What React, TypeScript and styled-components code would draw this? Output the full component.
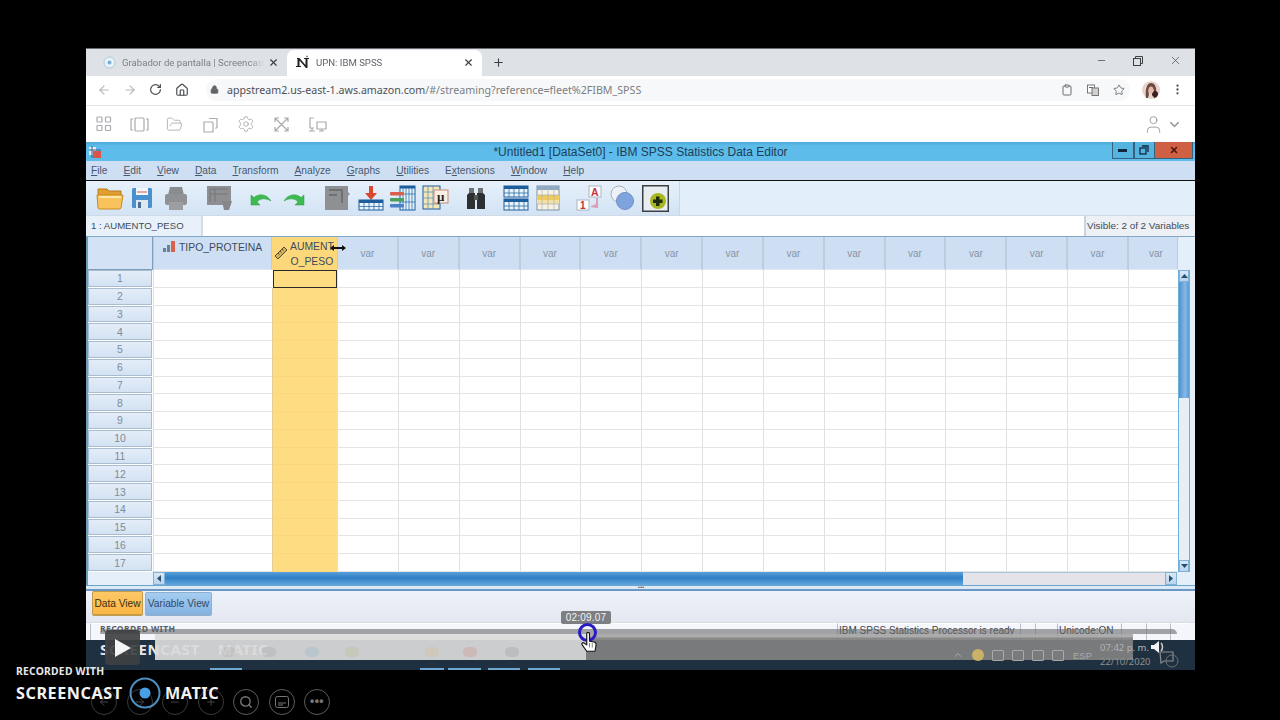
import React from "react";
import styled, { createGlobalStyle } from "styled-components";
import { ArrowLeft, ArrowRight, RotateCw, Home, Lock, Clipboard, Star, MoreVertical, Minus, X, Plus, FolderOpen, Settings, User, ChevronDown, Search } from "lucide-react";

const Global = createGlobalStyle`
  html, body { margin: 0; background: #000; }
  * { box-sizing: border-box; }
`;

const Page = styled.div`
  position: relative; width: 1280px; height: 720px; background: #000; overflow: hidden;
  padding: 48px 85px 0 86px; font-family: "Liberation Sans", Arial, sans-serif;
`;
const Win = styled.div`display: flex; flex-direction: column; width: 1109px; height: 622px; background: #fff;`;

/* browser chrome */
const TabStrip = styled.div`
  height: 28px; background: #dee1e6; border-top: 1px solid #6b6d70; display: flex; align-items: flex-end; padding-left: 11px; flex: none;
`;
const Tab = styled.div<{ $active?: boolean }>`
  display: flex; align-items: center; height: 26px; border-radius: 7px 7px 0 0; padding: 0 8px 2px ${p => (p.$active ? 9 : 6)}px;
  width: ${p => (p.$active ? 195 : 190)}px; background: ${p => (p.$active ? "#fff" : "transparent")};
  font-family: Roboto, sans-serif; font-size: 9.6px; color: ${p => (p.$active ? "#5f6368" : "#7d8185")};
`;
const TabLabel = styled.span<{ $w: number }>`
  width: ${p => p.$w}px; white-space: nowrap; overflow: hidden; margin-left: 6px; flex: none;
  -webkit-mask-image: linear-gradient(90deg, #000 90%, transparent);
`;
const TabClose = styled(X)`margin-left: auto; color: #3c4043; flex: none;`;
const NewTab = styled(Plus)`margin: 0 0 7px 10px; color: #3c4043;`;
const WinControls = styled.div`margin-left: auto; display: flex; gap: 26px; align-items: center; align-self: center; padding: 0 13px 4px 0; color: #3c4043;`;

const AddressBar = styled.div`
  height: 30px; flex: none; display: flex; align-items: center; padding: 0 0 2px 11px;
  border-bottom: 1px solid #e4e6e9; color: #5f6368;
`;
const NavIcon = styled.span<{ $w: number; $faint?: boolean }>`
  width: ${p => p.$w}px; flex: none; display: flex; color: ${p => (p.$faint ? "#b4b7bb" : "#4a4d51")};
`;
const Omnibox = styled.div`
  flex: none; width: 924px; margin-left: 7px; height: 22px; background: #f7f8f9; border-radius: 11px;
  display: flex; align-items: center; padding: 0 5px 0 4px; color: #5f6368;
`;
const Url = styled.span`font-family: "Noto Sans", sans-serif; font-size: 10.66px; margin-left: 8px; color: #7a7e83; white-space: nowrap;`;
const Host = styled.span`color: #4d5156;`;
const OmniRight = styled.div`margin-left: auto; display: flex; align-items: center; gap: 14px; color: #6a6d71;`;
const Avatar = styled.svg`margin-left: 12px; flex: none;`;
const MoreWrap = styled(NavIcon)`margin-left: 11px;`;

const AppBar = styled.div`
  height: 36px; flex: none; display: flex; align-items: center; padding: 0 13px 0 0; color: #a9abae;
`;
const AppIcon = styled.span`width: 35.6px; display: flex; justify-content: center;`;
const AppRight = styled.div`margin-left: auto; display: flex; align-items: center; gap: 3px; color: #9b9da0;`;

/* SPSS */
const TitleBar = styled.div`
  height: 19px; flex: none; display: grid; grid-template-columns: 1fr auto 1fr; align-items: center;
  background: linear-gradient(#4aa9d6, #5dbce9 20%); font-size: 12px; color: #1d3d58; padding-top: 1px;
`;
const SpssLogo = styled.svg`margin-left: 2px;`;
const TitleBtns = styled.div`justify-self: end; display: flex; height: 17px; margin: -1px 2px 0 0; align-self: start;`;
const TitleBtn = styled.div<{ $close?: boolean }>`
  width: ${p => (p.$close ? 38 : 21.5)}px; display: flex; align-items: center; justify-content: center;
  background: ${p => (p.$close ? "#cf6043" : "#55b3e0")}; border: 1px solid #35637f; border-left-width: ${p => (p.$close ? 0 : 1)}px;
  border-top: 0; color: ${p => (p.$close ? "#4a1208" : "#10283c")};
`;
const MenuBar = styled.div`
  height: 20px; flex: none; display: flex; gap: 16px; align-items: center; padding: 0 0 1px 5px;
  background: #cfdff3; border-bottom: 1px solid #111; font-size: 10.2px; color: #46596e;
`;
const MenuItem = styled.span`white-space: nowrap;`;
const Toolbar = styled.div`height: 35px; flex: none; background: #e2eefa; display: flex; border-bottom: 1px solid #cfdae6;`;
const ToolSegment = styled.div`
  width: 594px; display: flex; align-items: center; padding-left: 7px;
  background: linear-gradient(#e6f1fb, #d3e3f4); border-right: 1px solid #c9d7e6;
`;
const ToolSlot = styled.span<{ $gap: number }>`margin-left: ${p => p.$gap}px; display: flex; flex: none;`;

const FormulaBar = styled.div`height: 21px; flex: none; display: flex; background: #fff; font-size: 9.6px; color: #3e4a56; border-bottom: 1px solid #7fa9c6;`;
const NameBox = styled.div`width: 117px; padding: 4px 0 0 5px; background: #e8f1fa; border-right: 2px solid #d4dbe3;`;
const FormulaInput = styled.div`flex: 1;`;
const VisibleBox = styled.div`width: 111px; padding: 4px 0 0 1px; background: #edf0f4; border-left: 2px solid #cdd3da; font-size: 9.9px; white-space: nowrap;`;

const DataArea = styled.div`height: 335px; flex: none; display: flex; background: #e4eff9; border-left: 2px solid #6d9db9;`;
const Grid = styled.div`
  width: 1090px; display: grid; height: 335px;
  grid-template-columns: 65px 119px 65px repeat(13, 60.85px) 49.95px; grid-template-rows: 33px repeat(17, 1fr);
  background: #fff;
`;
const Corner = styled.div`background: #d3e2f4; border: 1px solid #7d9dba; border-width: 0 1px 1px 0;`;
const HeadCell = styled.div<{ $sel?: boolean }>`
  position: relative; background: ${p => (p.$sel ? "#fdd87a" : "#cfdff3")}; border: 0 solid #bccddd; border-width: 0 1px; border-bottom: 1px solid #dfe8f0;
  display: flex; font-size: 10.4px; color: #3d4b5c; line-height: 15px;
`;
const NamedHead = styled(HeadCell)`padding: 3px 0 0 8px; gap: 3px; white-space: nowrap;`;
const SelHead = styled(HeadCell)`padding: 2px 0 0 17px; text-align: center; align-items: flex-start; overflow: hidden; border-color: #fdd87a;`;
const HeadIconWrap = styled.span`position: absolute; left: 1px; top: 9px; display: flex;`;
const VarHead = styled(HeadCell)<{ $clip?: boolean }>`
  align-items: center; justify-content: center; color: #8794a5; font-size: 10px; padding-left: ${p => (p.$clip ? 6 : 0)}px;
`;
const RowHead = styled.div`
  margin: 0 1px 1px 0; padding-top: 1px; background: linear-gradient(#e4edf8, #d3e2f3); border: 1px solid #a9bdd0; display: flex; align-items: center; justify-content: center;
  font-size: 10.4px; color: #7d8b99;
`;
const Cell = styled.div<{ $sel?: boolean; $cur?: boolean }>`
  background: ${p => (p.$sel ? "#fddc82" : "#fff")};
  border-left: 1px solid ${p => (p.$sel ? "#e2cf95" : "#e0e0e0")};
  border-bottom: 1px solid ${p => (p.$sel ? "#fbd67a" : "#e4e4e4")};
  ${p => (p.$cur ? "border: 1.5px solid #2b2b2b; margin: 0 0 0 1px;" : "")}
`;
const VScroll = styled.div`width: 12px; margin-top: 33px; display: flex; flex-direction: column; background: #e9edf5; border: 1px solid #6fb0d8; border-width: 0 1px;`;
const ScrollBtn = styled.div`height: 12px; flex: none; background: linear-gradient(#d9e8f6, #b9d3ec); display: flex; align-items: center; justify-content: center; border: 1px solid #7fb2d6;`;
const VThumb = styled.div`height: 116px; flex: none; background: linear-gradient(90deg, #4d92d4, #86b8e6 60%, #5a9ad6);`;
const VRest = styled.div`flex: 1;`;
const HScrollRow = styled.div`height: 13px; flex: none; display: flex; background: #e4eff9; padding-left: 65px; border-left: 2px solid #6d9db9;`;
const HBtn = styled.div`width: 12px; background: linear-gradient(#d9e8f6, #b9d3ec); border: 1px solid #7fb2d6; display: flex; align-items: center; justify-content: center; flex: none;`;
const HThumb = styled.div`width: 798px; flex: none; background: linear-gradient(#5aa0dc, #2f7fc4 45%, #62a6de);`;
const HRest = styled.div`width: 202px; flex: none; background: #e5e3ea; border-top: 1px solid #a9c6de;`;
const Splitter = styled.div`
  height: 6px; flex: none; background: #dceaf6; border-top: 1px solid #6aa4cf; border-bottom: 2px solid #6a97c4;
  display: flex; align-items: center; justify-content: center; color: #41617f; font-size: 6px; line-height: 3px; padding-left: 1px;
`;
const TabArea = styled.div`height: 31px; flex: none; display: flex; gap: 2px; padding: 0 0 0 6px; background: linear-gradient(#eef2fb, #e4e7f0);`;
const ViewTab = styled.div<{ $active?: boolean }>`
  height: ${p => (p.$active ? 25 : 24)}px; margin-top: ${p => (p.$active ? 0 : 1)}px; display: flex; align-items: center; justify-content: center; border-radius: 2px;
  font-size: 10.2px; width: ${p => (p.$active ? 51 : 67)}px; white-space: nowrap;
  background: ${p => (p.$active ? "linear-gradient(#fdc867, #fbb744)" : "linear-gradient(#a6cdf0, #84b3e2)")};
  color: ${p => (p.$active ? "#3d2d10" : "#2e4a68")}; border: 1px solid ${p => (p.$active ? "#c49a4b" : "#8db0d2")};
  border-bottom-width: 2px;
`;
const StatusBar = styled.div`height: 18px; flex: none; background: #f4f6fb; display: flex; padding-left: 4px; border-top: 1px solid #d8dce4; font-size: 10px; color: #404347;`;
const StatusPane = styled.div<{ $w: number }>`
  width: ${p => p.$w}px; flex: none; border-left: 1px solid #b9bdc4; border-top: 1px solid #fff; padding: 1px 0 0 1px; white-space: nowrap;
`;
const Taskbar = styled.div`height: 30px; flex: none; background: #1f3140; display: flex; align-items: center; position: relative;`;
const TaskLine = styled.i<{ $w: number; $gap: number }>`
  display: block; position: absolute; bottom: 0; left: ${p => p.$gap}px; width: ${p => p.$w}px; height: 2px; background: #6ea7cf;
`;

/* video overlay */
const Band = styled.div`
  position: absolute; left: 100px; top: 629px; width: 1077px; height: 5px; background: rgba(105, 107, 110, .6); border-radius: 5px 5px 0 0;
`;
const Played = styled.div`
  position: absolute; left: 155px; top: 634px; width: 431px; height: 26px; background: rgba(218, 218, 218, .92);
`;
const Unplayed = styled.div`
  position: absolute; left: 586px; top: 634px; width: 547px; height: 26px;
  background: linear-gradient(rgba(165,165,165,.92) 0 3px, rgba(128,128,128,.93) 4px);
`;
const TrayRow = styled.div`
  position: absolute; left: 952px; top: 645px; height: 20px; display: flex; align-items: center; gap: 8px; color: #a9a9a9; font-size: 9.5px;
`;
const TrayDot = styled.span`width: 12px; height: 12px; border-radius: 50%; background: #c9b268;`;
const TrayIconBox = styled.span`width: 12px; height: 11px; border: 1px solid #a9a9a9; border-radius: 1px;`;
const TrayLang = styled.span`margin-left: 1px;`;
const Clock = styled.div`
  position: absolute; left: 1100px; top: 641px; color: #b1b4b7; font-size: 9.5px; line-height: 14px; white-space: nowrap; font-family: "Noto Sans", sans-serif;
`;
const ClockDate = styled.div`color: #8d8f92;`;
const Blob = styled.span<{ $x: number; $c: string }>`
  position: absolute; top: 647px; left: ${p => p.$x}px; width: 14px; height: 10px; border-radius: 40%; background: ${p => p.$c}; opacity: .15;
`;
const Speaker = styled.svg`position: absolute; left: 1150px; top: 640px;`;
const GhostTop = styled.div`
  position: absolute; left: 100px; top: 623px; font-size: 8.5px; font-weight: bold; color: #5c5f63; letter-spacing: .4px; font-family: "Noto Sans", sans-serif; line-height: 12px;
`;
const GhostBig = styled.div`
  position: absolute; left: 100px; top: 639px; font-size: 15px; font-weight: bold; color: rgba(255,255,255,.9); letter-spacing: .6px; font-family: "Noto Sans", sans-serif; white-space: pre;
`;
const PlayBtn = styled.div`
  position: absolute; left: 105px; top: 630px; width: 35px; height: 35px; border-radius: 4px; background: rgba(62, 64, 66, .92);
  display: flex; align-items: center; justify-content: center;
`;
const TimeTip = styled.div`
  position: absolute; left: 561px; top: 611px; width: 50px; height: 13px; background: #7d7e82; color: #f2f2f2; border-radius: 2px;
  font-size: 10px; text-align: center; line-height: 13px; letter-spacing: .2px;
`;
const Ring = styled.div`
  position: absolute; left: 578px; top: 623px; width: 19px; height: 19px; border-radius: 50%; border: 3px solid #2a1cc4;
`;
const HandCursor = styled.svg`position: absolute; left: 581px; top: 632px;`;
const ResizeCursor = styled.svg`position: absolute; left: 330px; top: 243px;`;
const WmSmall = styled.div`
  position: absolute; left: 16px; top: 664px; font-family: "Noto Sans", sans-serif; font-weight: bold; font-size: 10.3px; color: #e8e8e8; letter-spacing: .25px; line-height: 14px; white-space: nowrap;
`;
const WmBig = styled.div<{ $x: number }>`
  position: absolute; left: ${p => p.$x}px; top: 682px; font-family: "Noto Sans", sans-serif; font-weight: bold; font-size: 16.2px; color: #f2f2f2; letter-spacing: .55px; line-height: 22px; white-space: nowrap;
`;
const WmLogo = styled.svg`position: absolute; left: 129px; top: 677px;`;
const CtlRow = styled.div`position: absolute; left: 91px; top: 689px; display: flex; gap: 9.5px;`;
const Ctl = styled.div<{ $dim?: boolean }>`
  width: 26px; height: 26px; border-radius: 50%; border: 1.5px solid ${p => (p.$dim ? "#3a3a3a" : "#5c5c5c")};
  display: flex; align-items: center; justify-content: center; color: ${p => (p.$dim ? "#454545" : "#777")};
`;
const Dots = styled.span`font-size: 12px; line-height: 8px; font-weight: bold; letter-spacing: .5px; margin-top: -2px;`;

/* drawings */
const Svg: React.FC<{ w?: number; h?: number; children: React.ReactNode }> = ({ w = 26, h = 26, children }) => (
  <svg width={w} height={h} viewBox={`0 0 ${w} ${h}`} fill="none">{children}</svg>
);

const TableGlyph: React.FC<{ x: number; y: number; w: number; h: number; head?: string }> = ({ x, y, w, h, head = "#1d5d9b" }) => {
  const lines = [];
  for (let i = 1; i < 5; i++) lines.push(<path key={"v" + i} d={`M${x + (w * i) / 5} ${y}V${y + h}`} stroke="#2c6ea8" strokeWidth=".8" />);
  for (let i = 1; i < 3; i++) lines.push(<path key={"h" + i} d={`M${x} ${y + (h * i) / 3}H${x + w}`} stroke="#2c6ea8" strokeWidth=".8" />);
  return <g><rect x={x} y={y} width={w} height={h} fill="#eaf3fb" stroke={head} />{lines}<rect x={x} y={y} width={w} height={2.5} fill={head} /></g>;
};

const tools: [number, React.ReactNode][] = [
  [3, <Svg key="f" w={28} h={26}><path d="M2 4h9l2 2h12v8H2z" fill="#e0a030" stroke="#b97a18" /><path d="M1 10h26l-2 13a2 2 0 0 1-2 1H4a2 2 0 0 1-2-1z" fill="#f9c25c" stroke="#c98a22" /><path d="M3 12h22" stroke="#ffe7a8" strokeWidth="2" /></Svg>],
  [7, <Svg key="s" w={22} h={22}><rect x="1" y="1" width="20" height="20" rx="1.5" fill="#4a8fce" /><rect x="5" y="1" width="12" height="7" fill="#f3f6fa" /><path d="M6 5h10" stroke="#d9574a" /><rect x="5" y="13" width="12" height="8" fill="#dfe7ef" /><rect x="7" y="15" width="3" height="6" fill="#4a6f96" /></Svg>],
  [11, <Svg key="p" w={24} h={26}><path d="M6 2h12l2 8H4z" fill="#8a8d90" /><rect x="1" y="9" width="22" height="11" rx="2" fill="#8f9194" /><rect x="5" y="17" width="14" height="8" fill="#9c9ea1" /></Svg>],
  [18, <Svg key="d" w={26} h={26}><rect x="1" y="1" width="24" height="19" fill="#8e8f92" /><path d="M4 4v13M9 4v13M4 4h18M4 9h18" stroke="#777" /><path d="M16 16h10l-3 9h-5z" fill="#85878a" /></Svg>],
  [17, <Svg key="u" w={24} h={18}><path d="M2 16V6l3 2.500C10 4 18 5 22 12C17 9 11 9 8 13l3 3z" fill="#3dbb50" stroke="#2d9a40" strokeWidth=".5" /></Svg>],
  [9, <Svg key="r" w={24} h={18}><path d="M22 16V6l-3 2.500C14 4 6 5 2 12C7 9 13 9 16 13l-3 3z" fill="#3dbb50" stroke="#2d9a40" strokeWidth=".5" /></Svg>],
  [18, <Svg key="g" w={26} h={26}><rect x="1" y="1" width="23" height="24" fill="#8f9093" /><path d="M5 5h13v13M5 10h8" stroke="#6f7072" strokeWidth="2" /><path d="M24 7l2 2-2 2z" fill="#8f9093" /></Svg>],
  [8, <Svg key="a" w={26} h={26}><path d="M11 1h4v7h4l-6 7-6-7h4z" fill="#d8472e" /><rect x="1" y="15" width="24" height="10" fill="#eaf3fb" stroke="#1d5d9b" /><rect x="1" y="15" width="24" height="3" fill="#1d5d9b" /><path d="M6 18v7M11 18v7M16 18v7M21 18v7M1 21.5h24" stroke="#2c6ea8" strokeWidth=".8" /></Svg>],
  [5, <Svg key="v" w={28} h={26}><TableGlyph x={11} y={1} w={15} h={24} /><rect x="1" y="7" width="14" height="3.5" rx="1" fill="#d9604a" /><rect x="1" y="13" width="14" height="3.5" rx="1" fill="#4aa05a" /><rect x="1" y="19" width="14" height="3.5" rx="1" fill="#4a80c8" /></Svg>],
  [5, <Svg key="m" w={28} h={26}><rect x="1" y="1" width="17" height="23" fill="#f4e6b8" stroke="#1d5d9b" /><path d="M6 1v23M11 1v23M1 7h17M1 13h17M1 19h17" stroke="#5f8fb8" strokeWidth=".8" /><rect x="12" y="5" width="14" height="13" fill="#fbeee2" stroke="#c08a78" /><text x="15" y="16" fontSize="13" fontWeight="bold" fill="#222" fontFamily="Liberation Serif, serif">μ</text></Svg>],
  [15, <Svg key="b" w={22} h={26}><path d="M4 3h5v6H4zM13 3h5v6h-5z" fill="#6d7173" /><path d="M2 10l2-2h6v16H2zM12 8h6l2 2v14h-8z" fill="#2e2f31" /><rect x="9" y="10" width="4" height="5" fill="#55585a" /></Svg>],
  [16, <Svg key="sp" w={26} h={26}><rect x="1" y="1" width="24" height="11" fill="#eaf3fb" stroke="#1d5d9b" /><rect x="1" y="1" width="24" height="3" fill="#1d5d9b" /><rect x="1" y="14" width="24" height="11" fill="#eaf3fb" stroke="#1d5d9b" /><rect x="1" y="14" width="24" height="3" fill="#1d5d9b" /><path d="M6 4v8M11 4v8M16 4v8M21 4v8M6 17v8M11 17v8M16 17v8M21 17v8M1 8h24M1 21h24" stroke="#2c6ea8" strokeWidth=".8" /></Svg>],
  [7, <Svg key="se" w={24} h={26}><rect x="1" y="1" width="22" height="24" fill="#f7f3e4" stroke="#7d93a8" /><rect x="1" y="1" width="22" height="4" fill="#8fa8c4" /><rect x="1" y="10" width="22" height="5" fill="#f1cb5c" /><rect x="1" y="15" width="22" height="4" fill="#f5e1a0" /><path d="M6 1v24M12 1v24M18 1v24M1 10h22M1 19h22" stroke="#a8b0b8" strokeWidth=".7" /></Svg>],
  [16, <Svg key="l" w={26} h={26}><rect x="13" y="1" width="12" height="11" fill="#fff" stroke="#a9b5c2" /><text x="15" y="10.5" fontSize="10.5" fontWeight="bold" fill="#c8343f" fontFamily="Liberation Sans, sans-serif">A</text><rect x="1" y="15" width="12" height="10" fill="#fff" stroke="#a9b5c2" /><text x="4" y="24" fontSize="10" fontWeight="bold" fill="#c8343f" fontFamily="Liberation Sans, sans-serif">1</text><path d="M15 21l5-2v-6l2 0v10h-2l-5-1z" fill="#d9a0b8" /></Svg>],
  [7, <Svg key="c" w={26} h={26}><circle cx="10" cy="9" r="8" fill="#eef2f7" stroke="#a8b0b8" /><circle cx="16" cy="16" r="8.5" fill="#7fa3dc" stroke="#6f90c4" /></Svg>],
  [6.5, <Svg key="pl" w={27} h={27}><rect x=".75" y=".75" width="25.500" height="25.500" fill="#e9edf2" stroke="#3c3f42" strokeWidth="1.500" /><circle cx="16" cy="16" r="8" fill="#a8b81e" /><path d="M14 11.500h3.500V14.500H20.500V18H17.500V21H14V18H11V14.500H14z" fill="#1f2a10" /></Svg>],
];

const rows = Array.from({ length: 17 }, (_, i) => i + 1);
const varCols = Array.from({ length: 14 }, (_, i) => i);

export default function App() {
  return (
    <Page>
      <Global />
      <Win>
        <TabStrip>
          <Tab>
            <svg width="13" height="13" viewBox="0 0 13 13"><circle cx="6.500" cy="6.500" r="5.500" fill="#e8f2f8" stroke="#a9c8da" /><circle cx="6.500" cy="6.500" r="2" fill="#7cb0d0" /></svg>
            <TabLabel $w={142}>Grabador de pantalla | Screencast-O-Matic</TabLabel>
            <TabClose size={11} strokeWidth={2.5} />
          </Tab>
          <Tab $active>
            <svg width="14" height="14" viewBox="0 0 14 14"><path d="M1 3h2.500l6 7V4H8V3h5v1h-1.500v9H10L3.500 5.500V11H5v1H0v-1h1.500V4H1z" fill="#222" /><circle cx="11" cy="1.500" r="1" fill="#888" /></svg>
            <TabLabel $w={100}>UPN: IBM SPSS</TabLabel>
            <TabClose size={11} strokeWidth={2.5} />
          </Tab>
          <NewTab size={13} strokeWidth={2} />
          <WinControls>
            <Minus size={11} strokeWidth={1.5} />
            <svg width="10" height="10" viewBox="0 0 10 10" fill="none" stroke="currentColor"><rect x=".5" y="2.500" width="7" height="7" /><path d="M2.500 2.500v-2h7v7h-2" /></svg>
            <X size={13} strokeWidth={1.2} />
          </WinControls>
        </TabStrip>
        <AddressBar>
          <NavIcon $w={26} $faint><ArrowLeft size={14} /></NavIcon>
          <NavIcon $w={26} $faint><ArrowRight size={14} /></NavIcon>
          <NavIcon $w={26}><RotateCw size={13} strokeWidth={2.2} /></NavIcon>
          <NavIcon $w={24}><Home size={14} strokeWidth={2} /></NavIcon>
          <Omnibox>
            <Lock size={9} fill="currentColor" />
            <Url><Host>appstream2.us-east-1.aws.amazon.com</Host>/#/streaming?reference=fleet%2FIBM_SPSS</Url>
            <OmniRight>
              <Clipboard size={12} />
              <svg width="12" height="12" viewBox="0 0 12 12"><rect x=".5" y="1" width="7" height="8" fill="#fff" stroke="#777" /><rect x="5" y="4" width="6.500" height="7.500" fill="#d0d0d0" stroke="#777" /><path d="M2 3h4v1H2z" fill="#666" /></svg>
              <Star size={12} strokeWidth={1.8} />
            </OmniRight>
          </Omnibox>
          <Avatar width="18" height="18" viewBox="0 0 18 18">
            <circle cx="9" cy="9" r="9" fill="#e8d4cf" />
            <path d="M4 17C3 8 5 2 9 2s6 5 5 10l1 4-3 1.500-1-4c2-2 1-6-2-6S6 10 7 13L6 17z" fill="#6d4a40" />
            <circle cx="13" cy="13" r="3" fill="#3a2020" />
            <ellipse cx="9" cy="9" rx="2.500" ry="3.500" fill="#e6b8a8" />
          </Avatar>
          <MoreWrap $w={13}><MoreVertical size={13} strokeWidth={2.2} /></MoreWrap>
        </AddressBar>
        <AppBar>
          <AppIcon><svg width="16" height="16" viewBox="0 0 16 16" fill="none" stroke="currentColor" strokeWidth="1.200"><rect x="1" y="1" width="5" height="5" rx=".8" /><rect x="9.500" y="1" width="5" height="5" rx=".8" /><rect x="1" y="9.500" width="5" height="5" rx=".8" /><rect x="9.500" y="9.500" width="5" height="5" rx=".8" /></svg></AppIcon>
          <AppIcon><svg width="19" height="15" viewBox="0 0 19 15" fill="none" stroke="currentColor" strokeWidth="1.200"><rect x="5" y="1" width="9" height="13" rx="1" /><path d="M3 2H1v11h2M16 2h2v11h-2" /></svg></AppIcon>
          <AppIcon><FolderOpen size={17} strokeWidth={1.2} /></AppIcon>
          <AppIcon><svg width="17" height="17" viewBox="0 0 17 17" fill="none" stroke="currentColor" strokeWidth="1.200"><path d="M2 6h8l1 1v9H2zM7 2.500h8v9l-1.500 1" /></svg></AppIcon>
          <AppIcon><Settings size={18} strokeWidth={1.2} /></AppIcon>
          <AppIcon><svg width="17" height="17" viewBox="0 0 17 17" fill="none" stroke="currentColor" strokeWidth="1.200"><path d="M2 2l13 13M15 2L2 15M2 6V2h4M11 2h4v4M2 11v4h4M11 15h4v-4" /></svg></AppIcon>
          <AppIcon><svg width="19" height="15" viewBox="0 0 19 15" fill="none" stroke="currentColor" strokeWidth="1.200"><path d="M6 1H2v10h4M1 14h6M4 11v3M9 5h9v7H9zM13.500 12v2M11 14h5" /></svg></AppIcon>
          <AppRight><User size={21} strokeWidth={1.1} /><ChevronDown size={15} strokeWidth={2.4} /></AppRight>
        </AppBar>
        <TitleBar>
          <SpssLogo width="14" height="14" viewBox="0 0 14 14"><rect x="1" y="2" width="7" height="8" fill="#e8eef5" /><rect x="5" y="6" width="8" height="7" fill="#d9544a" /><path d="M1 5h12M4 1v12" stroke="#34618e" /></SpssLogo>
          <span>*Untitled1 [DataSet0] - IBM SPSS Statistics Data Editor</span>
          <TitleBtns>
            <TitleBtn><svg width="9" height="3"><rect width="9" height="3" fill="currentColor" /></svg></TitleBtn>
            <TitleBtn><svg width="10" height="10" viewBox="0 0 10 10" fill="none" stroke="currentColor" strokeWidth="1.300"><rect x="1" y="3" width="6" height="6" /><path d="M3 1h6v6" /></svg></TitleBtn>
            <TitleBtn $close><X size={10} strokeWidth={3.5} /></TitleBtn>
          </TitleBtns>
        </TitleBar>
        <MenuBar>
          <MenuItem><u>F</u>ile</MenuItem>
          <MenuItem><u>E</u>dit</MenuItem>
          <MenuItem><u>V</u>iew</MenuItem>
          <MenuItem><u>D</u>ata</MenuItem>
          <MenuItem><u>T</u>ransform</MenuItem>
          <MenuItem><u>A</u>nalyze</MenuItem>
          <MenuItem><u>G</u>raphs</MenuItem>
          <MenuItem><u>U</u>tilities</MenuItem>
          <MenuItem>E<u>x</u>tensions</MenuItem>
          <MenuItem><u>W</u>indow</MenuItem>
          <MenuItem><u>H</u>elp</MenuItem>
        </MenuBar>
        <Toolbar>
          <ToolSegment>
            {tools.map(([gap, icon], i) => <ToolSlot key={i} $gap={gap}>{icon}</ToolSlot>)}
          </ToolSegment>
        </Toolbar>
        <FormulaBar>
          <NameBox>1 : AUMENTO_PESO</NameBox>
          <FormulaInput />
          <VisibleBox>Visible: 2 of 2 Variables</VisibleBox>
        </FormulaBar>
        <DataArea>
          <Grid>
            <Corner />
            <NamedHead>
              <svg width="14" height="13" viewBox="0 0 14 13"><rect x="1" y="8" width="3" height="4" fill="#6d7f92" /><rect x="5" y="5" width="3" height="7" fill="#6d7f92" /><rect x="9" y="1" width="4" height="11" fill="#d9604a" /></svg>
              TIPO_PROTEINA
            </NamedHead>
            <SelHead $sel>
              <HeadIconWrap><svg width="14" height="14" viewBox="0 0 14 14"><path d="M1 10l9-9 3 3-9 9z" fill="#d0b060" stroke="#5a5030" /><path d="M4 7l1.500 1.500M6 5l1.500 1.500M8 3l1.500 1.500" stroke="#5a5030" /></svg></HeadIconWrap>
              <span>AUMENT<br />O_PESO</span>
            </SelHead>
            {varCols.map(i => <VarHead key={i} $clip={i === 13}>var</VarHead>)}
            {rows.map(r => (
              <React.Fragment key={r}>
                <RowHead>{r}</RowHead>
                <Cell />
                <Cell $sel $cur={r === 1} />
                {varCols.map(i => <Cell key={i} />)}
              </React.Fragment>
            ))}
          </Grid>
          <VScroll>
            <ScrollBtn><svg width="7" height="4"><path d="M3.500 0L7 4H0z" fill="#28506f" /></svg></ScrollBtn>
            <VThumb />
            <VRest />
            <ScrollBtn><svg width="7" height="4"><path d="M3.500 4L7 0H0z" fill="#28506f" /></svg></ScrollBtn>
          </VScroll>
        </DataArea>
        <HScrollRow>
          <HBtn><svg width="4" height="7"><path d="M0 3.500L4 0v7z" fill="#28506f" /></svg></HBtn>
          <HThumb />
          <HRest />
          <HBtn><svg width="4" height="7"><path d="M4 3.500L0 0v7z" fill="#28506f" /></svg></HBtn>
        </HScrollRow>
        <Splitter>•••</Splitter>
        <TabArea>
          <ViewTab $active>Data View</ViewTab>
          <ViewTab>Variable View</ViewTab>
        </TabArea>
        <StatusBar>
          <StatusPane $w={747} />
          <StatusPane $w={183}>IBM SPSS Statistics Processor is ready</StatusPane>
          <StatusPane $w={15} />
          <StatusPane $w={22} />
          <StatusPane $w={64}>Unicode:ON</StatusPane>
          <StatusPane $w={25} />
          <StatusPane $w={24} />
          <StatusPane $w={20} />
        </StatusBar>
        <Taskbar>
          <TaskLine $w={32} $gap={124} />
          <TaskLine $w={24} $gap={334} />
          <TaskLine $w={33} $gap={362} />
          <TaskLine $w={32} $gap={402} />
          <TaskLine $w={32} $gap={442} />
        </Taskbar>
      </Win>

      <Band />
      <GhostTop>RECORDED WITH</GhostTop>
      <GhostBig>{"SCREENCAST    MATIC"}</GhostBig>
      <Played />
      <Unplayed />
      <Blob $x={222} $c="#888" />
      <Blob $x={262} $c="#777" />
      <Blob $x={305} $c="#5aa0c8" />
      <Blob $x={345} $c="#b0b040" />
      <Blob $x={425} $c="#e0b040" />
      <Blob $x={463} $c="#e05030" />
      <Blob $x={505} $c="#666" />
      <TrayRow>
        <ChevronDown size={12} style={{ transform: "rotate(180deg)" }} />
        <TrayDot />
        <TrayIconBox />
        <TrayIconBox />
        <TrayIconBox />
        <TrayIconBox />
        <TrayLang>ESP</TrayLang>
      </TrayRow>
      <Clock>07:42 p. m.<ClockDate>22/10/2020</ClockDate></Clock>
      <Speaker width="32" height="30" viewBox="0 0 32 30" fill="none">
        <path d="M1 5h3l5-4v12L4 9H1z" fill="#f4f4f4" />
        <path d="M11 3c2 2 2 6 0 8" stroke="#d0d0d0" strokeWidth="1.500" />
        <path d="M10 12h13v9H14l-3 2z" stroke="#8a8d90" strokeWidth="1.200" />
        <circle cx="22" cy="21" r="6" stroke="#6f7276" />
      </Speaker>
      <PlayBtn><svg width="18" height="20" viewBox="0 0 18 20"><path d="M1 1l16 9-16 9z" fill="#f5f5f5" /></svg></PlayBtn>
      <TimeTip>02:09.07</TimeTip>
      <Ring />
      <HandCursor width="17" height="22" viewBox="0 0 18 24">
        <path d="M6 2a1.500 1.500 0 0 1 3 0v8l5 1c2 .5 2.500 2 2 4l-1 6H6L1 14c-1-1.500.5-3 2-2l3 2z" fill="#fff" stroke="#111" strokeWidth="1.200" strokeLinejoin="round" />
        <path d="M9 12v5M12 12v5" stroke="#777" />
      </HandCursor>
      <ResizeCursor width="16" height="10" viewBox="0 0 16 10"><path d="M0 5l4-3v2h8V2l4 3-4 3V6H4v2z" fill="#111" /></ResizeCursor>

      <CtlRow>
        <Ctl $dim><ArrowLeft size={12} /></Ctl>
        <Ctl $dim><ArrowRight size={12} /></Ctl>
        <Ctl $dim><Minus size={12} /></Ctl>
        <Ctl $dim><Plus size={12} /></Ctl>
        <Ctl><Search size={14} strokeWidth={2.4} /></Ctl>
        <Ctl><svg width="14" height="12" viewBox="0 0 14 12" fill="none" stroke="currentColor"><rect x=".5" y=".5" width="13" height="11" rx="2" /><path d="M3 7h8M3 9h5" /></svg></Ctl>
        <Ctl><Dots>•••</Dots></Ctl>
      </CtlRow>
      <WmSmall>RECORDED WITH</WmSmall>
      <WmBig $x={16}>SCREENCAST</WmBig>
      <WmLogo width="32" height="32" viewBox="0 0 32 32" fill="none"><circle cx="16" cy="16" r="14.500" stroke="#4f8fbf" strokeWidth="2" /><circle cx="16" cy="16" r="5.500" fill="#4aa0e8" /></WmLogo>
      <WmBig $x={165}>MATIC</WmBig>
    </Page>
  );
}
